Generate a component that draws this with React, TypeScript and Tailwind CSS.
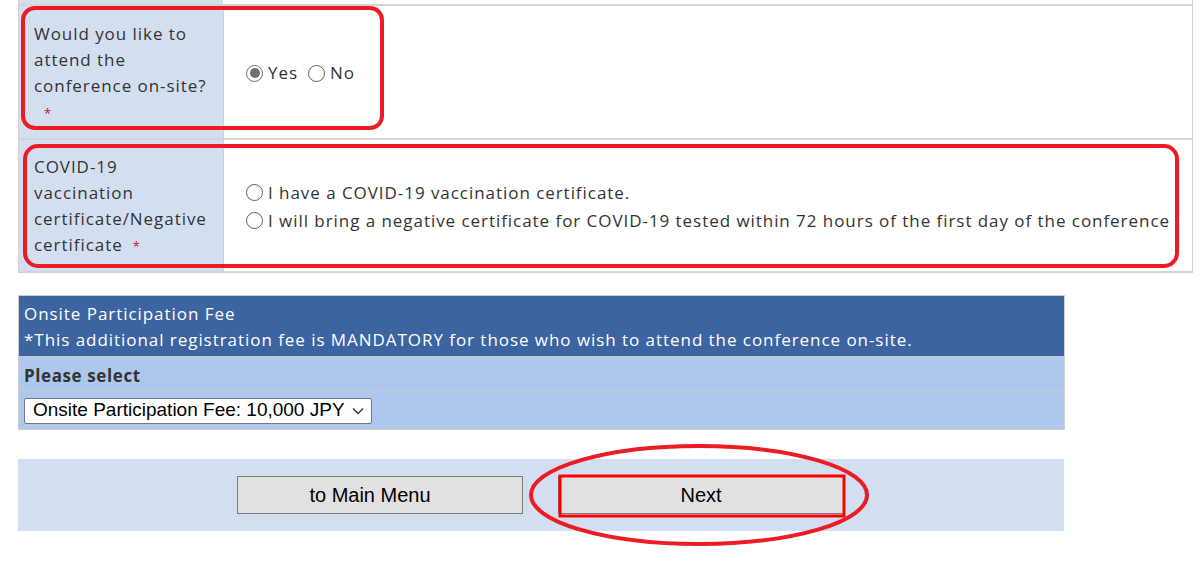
import * as React from "react";

const LABEL_FONT = "font-['Open_Sans',sans-serif]";

function Radio({ checked = false }: { checked?: boolean }) {
  return (
    <span
      className={
        "inline-flex h-[17px] w-[17px] shrink-0 items-center justify-center rounded-full border bg-white " +
        (checked ? "border-[#6b6b6b]" : "border-[#5c5c5c]")
      }
    >
      {checked ? <span className="h-[10px] w-[10px] rounded-full bg-[#707070]" /> : null}
    </span>
  );
}

function Required() {
  return <span className="ml-[10px] text-[13px] text-[#d0102a]">*</span>;
}

/** Red annotation marks drawn over the captured form. */
function Annotations() {
  return (
    <svg className="pointer-events-none absolute inset-0" width="1202" height="561" viewBox="0 0 1202 561">
      <rect x="23" y="8" width="359" height="120" rx="12" fill="none" stroke="#ec1c24" strokeWidth="4" />
      <rect x="25" y="146" width="1152" height="120" rx="13" fill="none" stroke="#ec1c24" strokeWidth="4" />
      <rect x="560" y="476" width="284" height="40" fill="none" stroke="#ff0000" strokeWidth="3" />
      <ellipse cx="699" cy="495" rx="168" ry="49" fill="none" stroke="#ec1c24" strokeWidth="4" />
    </svg>
  );
}

export default function App() {
  return (
    <div className={"relative h-[561px] w-[1202px] overflow-hidden bg-white text-[#333] " + LABEL_FONT}>
      {/* attendance table */}
      <div className="ml-[18px] w-[1175px] border-x border-[#d2d2d2]">
        <div className="grid h-[4px] grid-cols-[204px_1fr]">
          <div className="bg-[#d3dff0]" />
          <div />
        </div>
        <div className="h-[2px] bg-[#d4d4d4]" />

        <div className="grid h-[132px] grid-cols-[204px_1fr]">
          <div className="bg-[#d3dff0] px-[15px] pt-[15px] text-[17px] leading-[26px] tracking-[0.95px]">
            Would you like to
            <br />
            attend the
            <br />
            conference on-site?
            <br />
            <Required />
          </div>
          <div className="flex items-center gap-[5px] border-l border-[#cfcfcf] pl-[22px] pt-[2px] text-[17px] tracking-[0.95px]">
            <Radio checked />
            <span className="mr-[5px]">Yes</span>
            <Radio />
            <span>No</span>
          </div>
        </div>
        <div className="h-[2px] bg-[#d4d4d4]" />

        <div className="grid h-[131px] grid-cols-[204px_1fr]">
          <div className="bg-[#d3dff0] px-[15px] pt-[14px] text-[17px] leading-[26px] tracking-[0.95px]">
            COVID-19
            <br />
            vaccination
            <br />
            certificate/Negative
            <br />
            certificate
            <Required />
          </div>
          <div className="flex flex-col justify-center border-l border-[#cfcfcf] pl-[22px] pt-[2px] text-[17px] leading-[28px] tracking-[0.95px]">
            <div className="flex items-center gap-[5px]">
              <Radio />
              <span>I have a COVID-19 vaccination certificate.</span>
            </div>
            <div className="flex items-center gap-[5px] whitespace-nowrap">
              <Radio />
              <span>
                I will bring a negative certificate for COVID-19 tested within 72 hours of the first day of the conference
              </span>
            </div>
          </div>
        </div>
        <div className="h-[2px] bg-[#d4d4d4]" />
      </div>

      {/* onsite fee */}
      <div className="ml-[18px] mt-[22px] w-[1047px] border border-[#cfcfcf]">
        <div className="bg-[#3c64a0] px-[5px] pb-[3px] pt-[5px] text-[17px] leading-[26px] tracking-[0.95px] text-white">
          Onsite Participation Fee
          <br />
          *This additional registration fee is MANDATORY for those who wish to attend the conference on-site.
        </div>
        <div className="h-[1px] bg-[#c9c9c9]" />
        <div className="flex h-[34px] items-center bg-[#adc8ec] px-[5px] pt-[4px] text-[17px] font-bold tracking-[0.6px] text-[#333]">
          Please select
        </div>
        <div className="h-[1px] bg-[#c9c9c9]" />
        <div className="flex h-[37px] items-center bg-[#adc8ec] px-[5px]">
          <div className="flex h-[26px] w-[348px] items-center justify-between rounded-[2px] border border-[#767676] bg-white pl-[8px] pr-[7px] font-['Liberation_Sans',Arial,sans-serif] text-[19px] text-black">
            <span>Onsite Participation Fee: 10,000 JPY</span>
            <svg width="12" height="8" viewBox="0 0 12 8" fill="none" stroke="#333" strokeWidth="1.3">
              <path d="M1 1.5 L6 6.5 L11 1.5" />
            </svg>
          </div>
        </div>
      </div>

      {/* actions */}
      <div className="ml-[18px] mt-[29px] flex h-[72px] w-[1046px] items-center bg-[#d3dff0] pl-[219px] font-['Liberation_Sans',Arial,sans-serif]">
        <button className="h-[38px] w-[286px] border border-[#7a7a7a] bg-[#e1e1e1] pr-[20px] text-[20px] text-black">
          to Main Menu
        </button>
        <button className="ml-[35px] h-[38px] w-[286px] border border-[#7a7a7a] bg-[#e1e1e1] text-[20px] text-black">
          Next
        </button>
      </div>

      <Annotations />
    </div>
  );
}
